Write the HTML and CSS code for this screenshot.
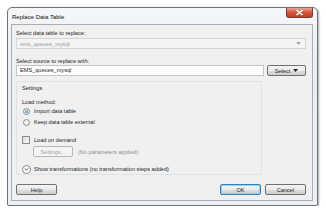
FILE: index.html
```html
<!DOCTYPE html>
<html>
<head>
<meta charset="utf-8">
<link rel="stylesheet" href="styles.css">
</head>
<body>
<div class="window">
  <div class="titlebar">
    <span class="title">Replace Data Table</span>
    <span class="close"><svg width="9" height="7" viewBox="0 0 9 7"><path d="M1.5 1 L7.5 6 M7.5 1 L1.5 6" stroke="#fff" stroke-width="1.6"/></svg></span>
  </div>
  <div class="client">
    <div class="label">Select data table to replace:</div>
    <div class="combo disabled"><span>ems_queues_mysql</span><svg width="5" height="3" viewBox="0 0 5 3"><path d="M0 0 H5 L2.5 3 Z" fill="#aaa"/></svg></div>
    <div class="label l2">Select source to replace with:</div>
    <div class="row">
      <div class="textbox">EMS_queues_mysql</div>
      <div class="btn select">Select <svg width="5" height="3" viewBox="0 0 5 3"><path d="M0 0 H5 L2.5 3 Z" fill="#222"/></svg></div>
    </div>
    <div class="group">
      <div class="gtitle">Settings</div>
      <div class="label lm">Load method:</div>
      <div class="opt o1"><span class="radio on"></span>Import data table</div>
      <div class="opt"><span class="radio"></span>Keep data table external</div>
      <div class="opt chk"><span class="check"></span>Load on demand</div>
      <div class="setrow"><div class="btn sbtn">Settings...</div><span class="muted">(No parameters applied)</span></div>
      <div class="opt exp"><span class="expander"><svg width="7" height="7" viewBox="0 0 7 7"><path d="M1.8 2.6 L3.5 4.3 L5.2 2.6" fill="none" stroke="#555" stroke-width="0.9"/></svg></span>Show transformations (no transformation steps added)</div>
    </div>
    <div class="footer">
      <div class="btn fbtn">Help</div>
      <div class="spacer"></div>
      <div class="btn fbtn ok">OK</div>
      <div class="btn fbtn">Cancel</div>
    </div>
  </div>
</div>
</body>
</html>
```
FILE: styles.css
```css
html, body { margin: 0; padding: 0; background: #fff; }
body { padding: 7px 0 0 7px; font-family: "Liberation Sans", Arial, sans-serif; font-size: 5.6px; color: #1e1e1e; }
.window {
  width: 309px; height: 197px;
  border: 1px solid #6e7378;
  border-radius: 5px 5px 2px 2px;
  background: linear-gradient(180deg, #f4f6f8 0%, #e9edf1 40%, #eef1f4 100%);
  box-shadow: 1px 1px 2px rgba(0,0,0,0.35);
  display: flex; flex-direction: column;
}
.titlebar { height: 16px; display: flex; align-items: flex-start; padding-left: 4px; }
.title { font-size: 6px; margin-top: 6px; color: #111; }
.close {
  margin-left: auto; margin-right: 4px; width: 25px; height: 9px;
  background: linear-gradient(180deg, #e8a494 0%, #d2553d 50%, #c0402a 100%);
  border: 1px solid #7b3a2e; border-top: none; border-radius: 0 0 3px 3px;
  display: flex; align-items: center; justify-content: center;
}
.client {
  flex: 1; margin: 0 4px 4px 3px;
  border: 1px solid #a7b0ba; background: #f0f0f0;
  padding: 4px 6px 0 4px;
  display: flex; flex-direction: column;
}
.label { height: 8px; line-height: 8px; }
.l2 { margin-top: 8px; }
.combo {
  height: 9px; border: 1px solid #d5d5d5; background: #f4f4f4;
  display: flex; align-items: center; padding: 0 4px 0 3px; margin-top: 1px;
}
.combo span { flex: 1; color: #9a9a9a; }
.row { display: flex; gap: 3px; }
.textbox { flex: 1; height: 9px; line-height: 9px; border: 1px solid #c6c6c6; background: #fff; padding: 0 3px; }
.btn {
  border: 1px solid #707070; border-radius: 2px;
  background: linear-gradient(180deg, #f4f4f4 0%, #ebebeb 50%, #dddddd 51%, #cfcfcf 100%);
  display: flex; align-items: center; justify-content: center; gap: 3px;
}
.select { width: 37px; height: 9px; }
.group {
  margin-top: 5px; margin-right: 44px;
  border: 1px solid #dce3e6; border-radius: 2px;
  padding: 2px 5px 0 5px;
}
.gtitle { height: 8px; line-height: 8px; }
.lm { margin-top: 6px; }
.opt { display: flex; align-items: center; height: 10px; margin-top: 1px; }
.o1 { margin-top: 0; }
.radio {
  width: 5px; height: 5px; border-radius: 50%;
  border: 1px solid #8b8b8b; background: radial-gradient(#fff, #e2e2e2);
  margin-right: 4px; margin-left: 1px; position: relative;
}
.radio.on::after {
  content: ""; position: absolute; left: 1px; top: 1px; width: 3px; height: 3px; border-radius: 50%;
  background: radial-gradient(circle at 40% 40%, #8fd1f4, #1f6ea5);
}
.chk { margin-top: 8px; }
.check { width: 6px; height: 6px; border: 1px solid #8b8b8b; background: linear-gradient(135deg, #dcdcdc, #fafafa); margin-right: 4px; }
.setrow { display: flex; align-items: center; margin-left: 11px; margin-top: 1px; gap: 5px; }
.sbtn { width: 38px; height: 9px; color: #a0a0a0; border-color: #b8b8b8; background: #f4f4f4; }
.muted { color: #8c8c8c; }
.exp { margin-top: 7px; white-space: nowrap; }
.expander { width: 7px; height: 7px; border: 1px solid #8a8a8a; border-radius: 50%; margin-right: 3px; display: flex; background: #fafafa; }
.footer { display: flex; margin-top: 9px; gap: 4px; }
.spacer { flex: 1; }
.fbtn { width: 39px; height: 9px; }
.ok { border-color: #3c7fb1; box-shadow: inset 0 0 0 1px #8fd0f5; }
```
